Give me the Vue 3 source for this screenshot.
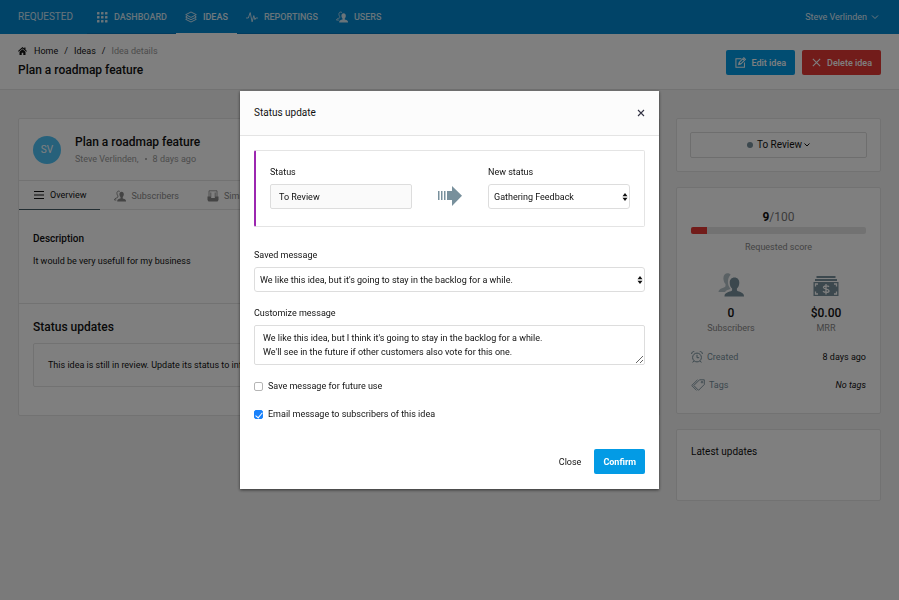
<template>
  <div class="page">
    <header class="topbar">
      <a class="brand" href="#">REQUESTED</a>
      <nav class="nav">
        <a class="nav-item" href="#dashboard">
          <svg class="ico-nav" viewBox="0 0 12 12" fill="currentColor" aria-hidden="true">
            <template v-for="row in 3" :key="row">
              <rect v-for="col in 3" :key="col" :x="(col - 1) * 4 + 1" :y="(row - 1) * 4 + 1" width="2.5" height="2.5" rx=".5" />
            </template>
          </svg>
          DASHBOARD
        </a>
        <a class="nav-item nav-item--active" href="#ideas">
          <svg class="ico-nav" viewBox="0 0 12 12" fill="none" stroke="currentColor" stroke-width=".9" stroke-linejoin="round" aria-hidden="true">
            <path d="M6 1 11.3 3.7 6 6.4.7 3.7Z" />
            <path d="M2.2 5.2.7 6 6 8.7 11.3 6 9.8 5.2M2.2 7.5.7 8.3 6 11l5.3-2.7-1.5-.8" />
          </svg>
          IDEAS
        </a>
        <a class="nav-item" href="#reportings">
          <svg class="ico-nav" viewBox="0 0 12 12" fill="none" stroke="currentColor" stroke-width=".9" stroke-linejoin="round" stroke-linecap="round" aria-hidden="true">
            <path d="M.5 7h1.8L4.2 1.6l1.9 9.2L7.8 4.6l1.1 4 .9-1.6h1.7" />
          </svg>
          REPORTINGS
        </a>
        <a class="nav-item" href="#users">
          <svg class="ico-nav" viewBox="0 0 26 24" fill="currentColor" aria-hidden="true">
            <path d="M16.5 4c3 0 4.8 2.2 4.8 5.2 0 2.6-1 4.7-2.4 5.8v1.8c0 1.5 7.1 1.4 7.1 5.6V24H7v-1.6c0-4.2 7.1-4.1 7.1-5.6V15c-1.4-1.1-2.4-3.2-2.4-5.8C11.7 6.2 13.5 4 16.5 4Z" />
            <path d="M13 2.2C9.5-.3 5.5 2.3 6.4 7c.4 2 1 3.6 2 4.6v1.7C8.4 15 1 14.5 1 18.7h6" fill="none" stroke="currentColor" stroke-width="1.6" />
          </svg>
          USERS
        </a>
      </nav>
      <button class="account" type="button">
        Steve Verlinden
        <svg class="ico-caret" viewBox="0 0 8 8" fill="none" stroke="currentColor" aria-hidden="true"><path d="M1 2.5 4 5.5 7 2.5" /></svg>
      </button>
    </header>

    <section class="subhead">
      <div>
        <nav class="crumbs" aria-label="Breadcrumb">
          <a href="#home">
            <svg class="ico-home" viewBox="0 0 18 16" fill="currentColor" aria-hidden="true">
              <path d="M9 0 0 8l1.3 1.5L9 2.8l7.7 6.7L18 8l-3-2.7V1h-2.500v2Z" />
              <path d="M9 4.5 3 9.7V16h4.4v-4.5h3.2V16H15V9.7Z" />
            </svg>
            Home
          </a>
          <span>/</span>
          <a href="#ideas">Ideas</a>
          <span>/</span>
          <span class="muted">Idea details</span>
        </nav>
        <h1 class="title">Plan a roadmap feature</h1>
      </div>
      <div class="actions">
        <button class="btn btn--blue" type="button">
          <svg class="ico-btn" viewBox="0 0 12 12" fill="none" stroke="currentColor" stroke-width="1.1" aria-hidden="true">
            <path d="M7 2H1v9.3h9.3V6" />
            <path d="M4 8.3 4.5 6 9.7.8l1.7 1.7L6.2 7.7ZM8.5 2l1.7 1.7M4.5 6l1.7 1.7" />
          </svg>
          Edit idea
        </button>
        <button class="btn btn--red" type="button">
          <svg class="ico-btn" viewBox="0 0 12 12" fill="none" stroke="currentColor" stroke-width="1.2" aria-hidden="true"><path d="m2 2 8 8M10 2l-8 8" /></svg>
          Delete idea
        </button>
      </div>
    </section>

    <main class="content">
      <article class="card">
        <header class="idea">
          <span class="avatar">SV</span>
          <div>
            <h2 class="title">Plan a roadmap feature</h2>
            <p class="meta">Steve Verlinden,<i class="sep"></i>8 days ago</p>
          </div>
        </header>
        <nav class="tabs">
          <a class="tab tab--active" href="#overview">
            <svg class="ico-tab" viewBox="0 0 12 12" stroke="currentColor" stroke-width="1.2" aria-hidden="true"><path d="M1 2.5h10M1 6h10M1 9.5h10" /></svg>
            Overview
          </a>
          <a class="tab" href="#subscribers">
            <svg class="ico-tab" viewBox="0 0 26 24" fill="currentColor" aria-hidden="true">
              <path d="M16.5 3c3 0 4.8 2.2 4.8 5.2 0 2.6-1 4.7-2.4 5.8v2.8c0 1.5 7.1 1.4 7.1 5.6V24H7v-1.6c0-4.2 7.1-4.1 7.1-5.6V14c-1.4-1.1-2.4-3.2-2.4-5.8C11.7 5.2 13.5 3 16.5 3Z" />
              <path d="M12.5 2C9.5 0 5.5 2.3 6.4 7c.4 2 1 3.6 2 4.6v2.7C8.4 17 1 15.5 1 20.7h4" fill="none" stroke="currentColor" stroke-width="2" />
            </svg>
            Subscribers
          </a>
          <a class="tab" href="#similar">
            <svg class="ico-tab" viewBox="0 0 12 12" aria-hidden="true">
              <path d="M2 7V.8h8V7M3.8 7V2.5M8.2 7V2.5" fill="none" stroke="currentColor" stroke-width=".8" />
              <path d="M.5 6.5h3L4.5 8h3l1-1.5h3V10l-1 1.5h-9L.5 10Z" fill="currentColor" />
            </svg>
            Similar ideas
          </a>
        </nav>
        <section class="description">
          <h3 class="subtitle">Description</h3>
          <p>It would be very usefull for my business</p>
        </section>
        <section class="updates">
          <h2 class="title">Status updates</h2>
          <p class="notice">This idea is still in review. Update its status to inform your subscribers.</p>
        </section>
      </article>

      <aside class="side">
        <section class="card pad">
          <button class="status-btn" type="button">
            <i class="dot"></i>
            To Review
            <svg class="ico-small" viewBox="0 0 6 6" fill="none" stroke="currentColor" aria-hidden="true"><path d="m.5 1.5 2.5 2.5 2.5-2.5" /></svg>
          </button>
        </section>

        <section class="card score">
          <p class="points"><b>{{ score }}</b>/100</p>
          <div class="bar"><div class="bar-fill" :style="{ width: score + '%' }"></div></div>
          <p class="label">Requested score</p>

          <div class="stats">
            <div class="stat">
              <svg class="ico-stat" viewBox="0 0 26 24" fill="currentColor" aria-hidden="true">
                <path d="M12.7 1.7C9.5-1.5 4.6 1.1 5.5 6.5c.3 2 1 3.5 2 4.5v2C7.5 15 .5 15 .5 19H7c1-1.7 4-2.3 5.5-3.2-1.8-2-2.8-4.8-2.5-7.8.2-2.6 1-4.6 2.7-6.3Z" opacity=".55" />
                <path d="M16.5 4.5c3 0 4.8 2.2 4.8 5.2 0 2.6-1 4.7-2.4 5.8v1.8c0 1.5 7.1 1.4 7.1 5.6v.6H6.5v-.6c0-4.2 7.6-4.1 7.6-5.6v-1.8c-1.4-1.1-2.4-3.2-2.4-5.8 0-3 1.8-5.2 4.8-5.2Z" />
              </svg>
              <strong>0</strong>
              <span class="small">Subscribers</span>
            </div>
            <div class="stat">
              <svg class="ico-stat" viewBox="0 0 26 24" aria-hidden="true">
                <path d="M3.5 3h19v2h-19zM2 6h22v2H2zM.5 9h25v14H.5z" fill="currentColor" />
                <path d="M2.5 13.5V11H5M21 11h2.5v2.5M2.5 18.5V21H5M21 21h2.5v-2.5" class="note-line" />
                <path d="M16 13.7c-1.2-1.2-6-1-5.5 1 .5 1.8 5.5 1 5.5 3.2 0 2-4.7 1.7-6 .3M13 11v10.4" class="note-line" />
              </svg>
              <strong>$0.00</strong>
              <span class="small">MRR</span>
            </div>
          </div>

          <dl class="facts">
            <div class="fact">
              <dt>
                <svg class="ico-tab" viewBox="0 0 12 12" fill="none" stroke="currentColor" aria-hidden="true">
                  <circle cx="6" cy="6.5" r="4.4" />
                  <path d="M6 3.8v2.9h2.2M.7 3a2 2 0 0 1 2.6-2.3M11.3 3A2 2 0 0 0 8.7.7M2.7 10l-1 1.5M9.3 10l1 1.5" />
                </svg>
                Created
              </dt>
              <dd>8 days ago</dd>
            </div>
            <div class="fact">
              <dt>
                <svg class="ico-tags" viewBox="0 0 14 12" fill="none" stroke="currentColor" stroke-width=".9" aria-hidden="true">
                  <path d="M8.5.8h4.8v4.7L7.5 11.3 2.8 6.5ZM6.5.8.7 6.5l4.8 4.8" />
                  <circle cx="11" cy="3.2" r=".8" />
                </svg>
                Tags
              </dt>
              <dd><em>No tags</em></dd>
            </div>
          </dl>
        </section>

        <section class="card latest">
          <h2 class="plain-title">Latest updates</h2>
        </section>
      </aside>
    </main>

    <div class="overlay">
      <form class="modal" role="dialog" aria-labelledby="modal-title" @submit.prevent>
        <header class="modal-head">
          <h2 id="modal-title" class="plain-title">Status update</h2>
          <button class="close" type="button" aria-label="Close dialog">
            <svg class="ico-close" viewBox="0 0 8 8" fill="none" stroke="currentColor" stroke-width="1.1"><path d="m1 1 6 6M7 1 1 7" /></svg>
          </button>
        </header>

        <div class="modal-body">
          <div class="change">
            <div class="field">
              <label for="status">Status</label>
              <input id="status" class="control" type="text" value="To Review" readonly />
            </div>
            <svg class="arrow" viewBox="0 0 24 20" fill="currentColor" aria-hidden="true">
              <path d="M0 5h1.5v9H0zM3 5h1.5v9H3zM6 5h1.5v9H6zM9 5h5V0l10 9.7L14 20v-6H9z" />
            </svg>
            <div class="field">
              <label for="new-status">New status</label>
              <div class="select">
                <select id="new-status" v-model="newStatus" class="control">
                  <option>Gathering Feedback</option>
                </select>
                <svg class="updown" viewBox="0 0 6 8" fill="currentColor" aria-hidden="true"><path d="M3 0 5.5 3.3h-5zM3 8 .5 4.7h5z" /></svg>
              </div>
            </div>
          </div>

          <div class="field">
            <label for="saved">Saved message</label>
            <div class="select">
              <select id="saved" v-model="saved" class="control">
                <option>We like this idea, but it's going to stay in the backlog for a while.</option>
              </select>
              <svg class="updown" viewBox="0 0 6 8" fill="currentColor" aria-hidden="true"><path d="M3 0 5.5 3.3h-5zM3 8 .5 4.7h5z" /></svg>
            </div>
          </div>

          <div class="field">
            <label for="custom">Customize message</label>
            <textarea id="custom" v-model="message" class="control" rows="2"></textarea>
          </div>

          <label class="check"><input v-model="saveForLater" type="checkbox" />Save message for future use</label>
          <label class="check"><input v-model="emailSubscribers" type="checkbox" />Email message to subscribers of this idea</label>
        </div>

        <footer class="modal-foot">
          <button class="btn btn--plain" type="button">Close</button>
          <button class="btn btn--confirm" type="submit">Confirm</button>
        </footer>
      </form>
    </div>
  </div>
</template>

<script setup>
import { ref } from 'vue'

const score = 9
const newStatus = ref('Gathering Feedback')
const saved = ref("We like this idea, but it's going to stay in the backlog for a while.")
const message = ref(
  "We like this idea, but I think it's going to stay in the backlog for a while.\n" +
  "We'll see in the future if other customers also vote for this one."
)
const saveForLater = ref(false)
const emailSubscribers = ref(true)
</script>

<style>
body { margin: 0; background: #f5f5f5; }
</style>

<style scoped>
* { box-sizing: border-box; }
.page {
  min-height: 100vh;
  font-family: Roboto, "Liberation Sans", sans-serif;
  font-size: 9px; line-height: 14px; color: #111;
}
h1, h2, h3, p, dl, dd { margin: 0; }
a { color: inherit; text-decoration: none; }
button, input, select, textarea { font: inherit; color: inherit; margin: 0; }
button { cursor: pointer; }
svg { display: block; flex: none; }

.title { font-size: 12px; line-height: 16px; font-weight: 500; }
.subtitle { font-size: 10px; line-height: 16px; font-weight: 500; }
.plain-title { font-size: 10px; line-height: 16px; font-weight: 400; }
.muted { color: #999; }

/* 顶部导航 */
.topbar {
  display: flex; align-items: center; height: 34px; padding: 0 18px;
  background: #0288d1; color: #fff;
}
.brand { font-size: 10px; margin-right: 14px; opacity: 0.8; }
.nav { display: flex; align-self: stretch; font-weight: 500; }
.nav-item {
  display: flex; align-items: center; gap: 6px; padding: 0 9px;
  border-bottom: 1px solid #0277bd; color: #d3e8f4;
}
.nav-item--active { border-bottom-color: #fff; color: #e3f2fb; }
.account {
  display: flex; align-items: center; gap: 4px; margin-left: auto; padding: 0 2px;
  border: 0; background: none; color: #e3f2fb;
}
.ico-nav { width: 12px; height: 12px; }
.ico-caret { width: 8px; height: 8px; }

/* 面包屑与操作按钮 */
.subhead {
  display: flex; align-items: flex-start; justify-content: space-between;
  min-height: 56px; padding: 10px 18px; background: #fff; border-bottom: 1px solid #e4e4e4;
}
.crumbs { display: flex; gap: 6px; margin-bottom: 4px; }
.crumbs a { display: flex; align-items: center; gap: 7px; }
.ico-home { width: 9px; height: 8px; }
.actions { display: flex; gap: 7px; padding-top: 6px; }
.btn {
  display: flex; align-items: center; gap: 5px; height: 25px; padding: 0 9px;
  border: 0; border-radius: 2px; font-weight: 500; color: #fff;
}
.btn--blue { background: #039be5; }
.btn--red { background: #e53935; }
.btn--confirm { background: #039be5; font-weight: 700; }
.btn--plain { background: none; color: #111; font-weight: 400; }
.ico-btn { width: 11px; height: 11px; }

/* 主体两栏 */
.content {
  display: grid; grid-template-columns: minmax(0, 1fr) 205px; gap: 16px;
  align-items: start; padding: 28px 18px;
}
.card { background: #fff; border: 1px solid #e4e4e4; border-radius: 2px; }
.idea { display: flex; align-items: center; gap: 14px; height: 61px; padding: 0 14px; }
.avatar {
  display: flex; align-items: center; justify-content: center;
  width: 28px; height: 28px; border-radius: 50%; font-size: 10px;
  background: #4fc3f7; color: #fff;
}
.meta { display: flex; align-items: center; margin-top: 2px; color: #999; }
.sep { width: 2px; height: 2px; margin: 0 6px; border-radius: 50%; background: #999; }
.tabs { display: flex; height: 30px; border-top: 1px solid #e4e4e4; border-bottom: 1px solid #e4e4e4; }
.tab { display: flex; align-items: center; gap: 5px; padding: 0 14px; margin-bottom: -1px; color: #888; }
.tab--active { color: #111; border-bottom: 1px solid #455a64; }
.ico-tab { width: 12px; height: 12px; }
.description { min-height: 94px; padding: 21px 14px; border-bottom: 1px solid #e4e4e4; }
.subtitle + p { margin-top: 7px; }
.updates { padding: 15px 14px 28px; }
.notice { margin-top: 8px; padding: 14px; border: 1px solid #e4e4e4; border-radius: 2px; }

/* 右侧栏 */
.side { display: grid; gap: 15px; }
.pad { padding: 13px; }
.status-btn {
  display: flex; align-items: center; justify-content: center; gap: 2px;
  width: 100%; height: 26px; border: 1px solid #ddd; border-radius: 2px;
  background: none; font-size: 10px;
}
.dot { width: 6px; height: 6px; margin-right: 2px; border-radius: 50%; background: #78909c; }
.ico-small { width: 6px; height: 6px; }
.score { padding: 21px 14px; }
.points { font-size: 12px; line-height: 16px; text-align: center; color: #777; }
.points b { font-weight: 700; color: #111; }
.bar { height: 7px; margin: 2px 0 6px; border-radius: 2px; background: #e4e4e4; overflow: hidden; }
.bar-fill { height: 100%; background: #e53935; }
.label { text-align: center; color: #888; }
.stats { display: grid; grid-template-columns: 80px 80px; justify-content: space-between; margin-top: 19px; }
.stat { display: grid; justify-items: center; color: #78909c; }
.stat strong { margin-top: 8px; font-size: 12px; line-height: 16px; font-weight: 500; color: #111; }
.ico-stat { width: 26px; height: 24px; }
.note-line { fill: none; stroke: #fff; stroke-width: 1.3; }
.small { color: #888; }
.facts { display: grid; gap: 14px; margin-top: 15px; }
.fact { display: flex; justify-content: space-between; }
.fact dt { display: flex; align-items: center; gap: 4px; color: #78909c; }
.ico-tags { width: 14px; height: 12px; }
.latest { min-height: 72px; padding: 14px; }

/* 弹窗 */
.overlay {
  position: fixed; inset: 0; z-index: 10;
  display: flex; align-items: flex-start; justify-content: center;
  padding-top: 91px; background: rgba(0, 0, 0, 0.5); overflow: auto;
}
.modal { width: 419px; max-width: 100%; background: #fff; box-shadow: 0 1px 3px rgba(0, 0, 0, 0.6); }
.modal-head {
  display: flex; align-items: center; justify-content: space-between;
  height: 45px; padding: 0 14px; background: #fcfcfc; border-bottom: 1px solid #e4e4e4;
}
.close { padding: 0; border: 0; background: none; color: #334; }
.ico-close { width: 8px; height: 8px; }
.modal-body { display: grid; gap: 14px; padding: 14px; }
.change {
  display: grid; grid-template-columns: 1fr 24px 1fr; gap: 26px;
  margin-bottom: 7px; padding: 14px 14px 17px;
  border: 1px solid #e4e4e4; border-left: 2px solid #9c27b0; border-radius: 2px;
}
.arrow { align-self: end; width: 24px; height: 20px; margin-bottom: 3px; color: #78909c; }
.field { display: grid; gap: 5px; min-width: 0; }
.control {
  display: block; width: 100%; height: 25px; padding: 0 8px;
  border: 1px solid #ddd; border-radius: 2px; background: #fff; outline: 0;
}
.control[readonly] { background: #fafafa; }
.select { position: relative; }
.select .control { appearance: none; padding: 0 5px; border-radius: 3px; }
.updown { position: absolute; top: 9px; right: 2px; width: 6px; height: 8px; pointer-events: none; }
textarea.control { height: 40px; padding: 5px 8px; resize: vertical; }
.check { display: flex; align-items: center; gap: 5px; }
.check input {
  appearance: none; display: grid; justify-content: center;
  width: 9px; height: 9px; border: 1px solid #b5b5b5; border-radius: 2px; background: #fff;
}
.check input:checked { border-color: #1a82fb; background: #1a82fb; }
/* 勾选标记 */
.check input:checked::after {
  content: ''; width: 3px; height: 6px;
  border: solid #fff; border-width: 0 1px 1px 0; transform: rotate(40deg);
}
.modal-foot { display: flex; justify-content: flex-end; gap: 4px; padding: 14px 14px 15px; }
</style>
